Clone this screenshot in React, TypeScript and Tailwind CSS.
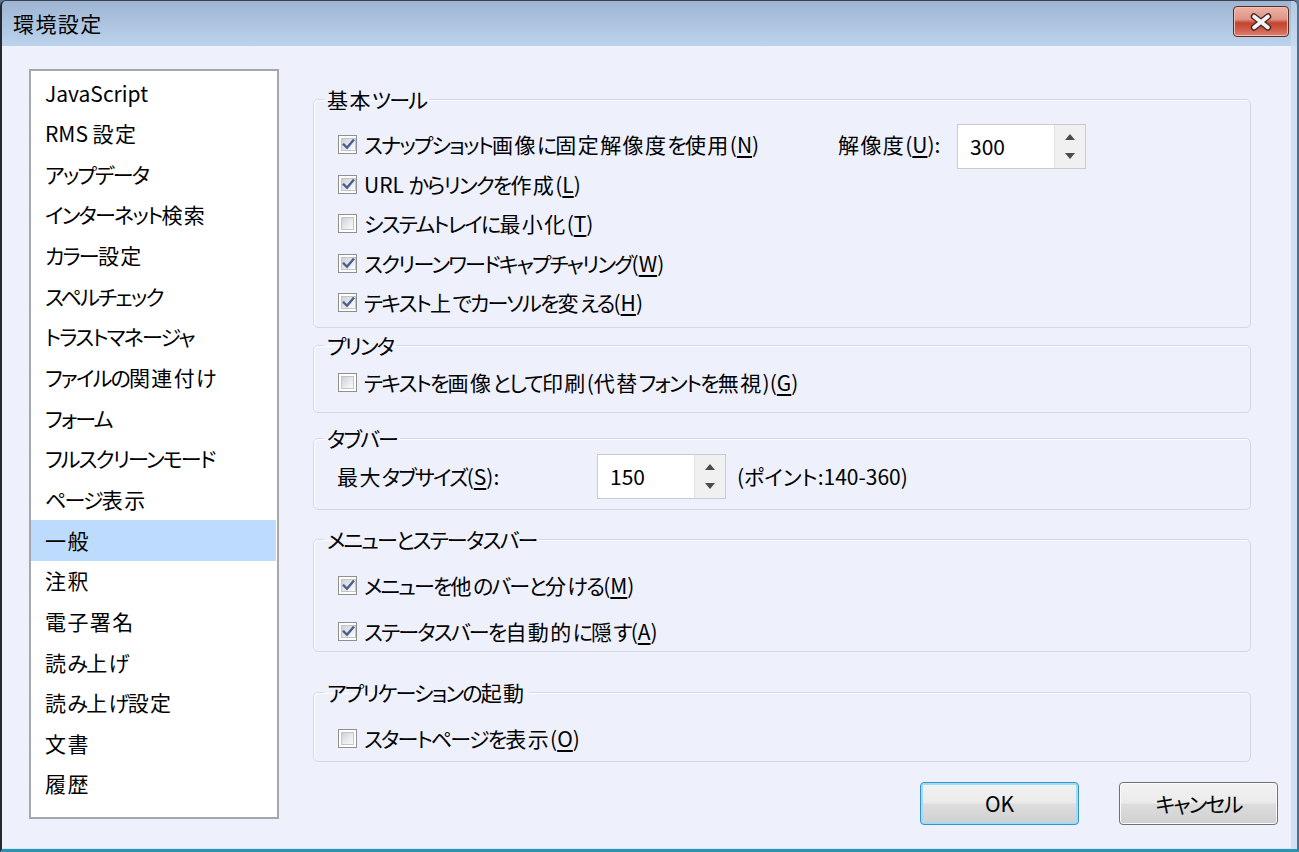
import React from "react";

const FONT = "font-['Noto_Sans_CJK_JP','Noto_Sans',sans-serif] [font-feature-settings:'palt']";

function J({ t }: { t: string }) {
  const parts = t.split(/([\u3040-\u30ff]+|[\u4e00-\u9fff]+)/).filter(Boolean);
  return (
    <>
      {parts.map((p, i) =>
        /[\u3040-\u30ff]/.test(p) ? (
          <span key={i} className="tracking-[-1.8px]">{p}</span>
        ) : /[\u4e00-\u9fff]/.test(p) ? (
          <span key={i} className="tracking-[1.4px]">{p}</span>
        ) : (
          <React.Fragment key={i}>{p}</React.Fragment>
        )
      )}
    </>
  );
}

function Cb({ checked }: { checked?: boolean }) {
  return (
    <span className="w-[19px] h-[19px] border border-[#8e8f8f] bg-white p-[2px] flex shrink-0">
      <span className="flex-1 border border-[#c3c5c9] bg-[linear-gradient(135deg,#cdd0d5_0%,#e9eaec_55%,#fbfbfb_100%)] flex items-center justify-center">
        {checked && (
          <svg width="13" height="13" viewBox="0 0 13 13">
            <path d="M1.8 6.6 L5 9.8 L11.2 2.4" fill="none" stroke="#4a5d92" strokeWidth="2.4" strokeLinecap="square" />
          </svg>
        )}
      </span>
    </span>
  );
}

function M({ c }: { c: string }) {
  return (
    <>
      (<span className="underline underline-offset-[3px] decoration-[1.5px]">{c}</span>)
    </>
  );
}

function Spin({ value }: { value: string }) {
  return (
    <div className="w-[129px] h-[45px] border border-[#c9cbd0] bg-white flex shrink-0">
      <div className="flex-1 flex items-center pl-[12px] text-[21px] text-black">{value}</div>
      <div className="w-[31px] bg-[#f0f0f0] border-l border-[#e2e2e2] flex flex-col">
        <div className="flex-1 flex items-center justify-center pt-[2px]">
          <svg width="10" height="6" viewBox="0 0 10 6"><path d="M0 6 L5 0 L10 6 Z" fill="#4b4b4b" /></svg>
        </div>
        <div className="flex-1 flex items-center justify-center pb-[2px]">
          <svg width="10" height="6" viewBox="0 0 10 6"><path d="M0 0 L10 0 L5 6 Z" fill="#4b4b4b" /></svg>
        </div>
      </div>
    </div>
  );
}

function Row({ checked, h, t, m }: { checked?: boolean; h: string; t: string; m: string }) {
  return (
    <div className={`flex items-center gap-[7px] ${h}`}>
      <Cb checked={checked} />
      <span className="text-[21px] leading-none text-black whitespace-nowrap">
        <J t={t} />
        <M c={m} />
      </span>
    </div>
  );
}

function Group({ title, cls, children }: { title: string; cls: string; children: React.ReactNode }) {
  return (
    <fieldset className={`w-[938px] border border-[#d3d9e2] rounded-[5px] shadow-[inset_1px_1px_0_#ffffff] ${cls}`}>
      <legend className="ml-[10px] px-[3px] text-[21px] leading-[24px] text-black whitespace-nowrap">
        <J t={title} />
      </legend>
      {children}
    </fieldset>
  );
}

const items = [
  "JavaScript",
  "RMS 設定",
  "アップデータ",
  "インターネット検索",
  "カラー設定",
  "スペルチェック",
  "トラストマネージャ",
  "ファイルの関連付け",
  "フォーム",
  "フルスクリーンモード",
  "ページ表示",
  "一般",
  "注釈",
  "電子署名",
  "読み上げ",
  "読み上げ設定",
  "文書",
  "履歴",
];

export default function App() {
  return (
    <div className={`w-[1299px] h-[852px] flex flex-col overflow-hidden bg-[#5f7a96] ${FONT}`}>
      <div className="flex-1 flex flex-col border-l-2 border-l-[#262a30] border-t border-t-[#3b4350] border-r-2 border-r-[#55708e] border-b-[3px] border-b-[#2a94b4] rounded-tl-[6px] rounded-tr-[6px] overflow-hidden">
        {/* Title bar */}
        <div className="h-[45px] flex shrink-0">
          <div className="flex-1 flex items-center pl-[11px] bg-[linear-gradient(to_bottom,#9db5d1,#bbd3ec)]">
            <span className="text-[21px] text-black">
              <J t="環境設定" />
            </span>
            <div className="ml-auto mr-[2px] mt-[-4px] w-[56px] h-[31px] rounded-[4px] border border-[#5b2b24] shadow-[inset_0_0_0_1px_#eec0b5] bg-[linear-gradient(to_bottom,#ecb3a6_0%,#df9585_42%,#c4432f_55%,#cc5a46_75%,#dc8270_100%)] flex items-center justify-center">
              <svg width="24" height="18" viewBox="0 0 24 18">
                <path d="M5 3.5 L19 14.5 M19 3.5 L5 14.5" stroke="#4a2a26" strokeWidth="6.5" strokeLinecap="round" />
                <path d="M5 3.5 L19 14.5 M19 3.5 L5 14.5" stroke="#f4f4f4" strokeWidth="3.6" strokeLinecap="round" />
              </svg>
            </div>
          </div>
          <div className="w-[6px] bg-[linear-gradient(to_bottom,#b4cbe3,#c7daef)]" />
        </div>
        {/* Body */}
        <div className="flex-1 flex">
          <div className="flex-1 bg-[#eef0fb] flex items-start pl-[27px] border-b border-b-[#d8e6f4]">
            {/* list */}
            <div className="mt-[23px] w-[250px] h-[750px] border-2 border-[#a6a7a9] bg-white pt-[2px] pr-[1px] flex flex-col">
              {items.map((t) => (
                <div
                  key={t}
                  className={`h-[40.65px] shrink-0 flex items-center pl-[14px] text-[21px] text-black whitespace-nowrap ${t === "一般" ? "bg-[#bddbfd]" : ""}`}
                >
                  <span>
                    <J t={t} />
                  </span>
                </div>
              ))}
            </div>
            {/* right column */}
            <div className="ml-[34px] mt-[41px] w-[965px] flex flex-col">
              <Group title="基本ツール" cls="h-[241px]">
                <div className="pl-[24px] pt-[14px] flex flex-col">
                  <div className="flex items-center h-[39.5px]">
                    <div className="w-[500px] flex items-center gap-[7px]">
                      <Cb checked />
                      <span className="text-[21px] leading-none text-black whitespace-nowrap">
                        <J t="スナップショット画像に固定解像度を使用" />
                        <M c="N" />
                      </span>
                    </div>
                    <span className="w-[119px] text-[21px] leading-none text-black whitespace-nowrap">
                      <J t="解像度" />
                      <M c="U" />:
                    </span>
                    <div className="mt-[3px]">
                      <Spin value="300" />
                    </div>
                  </div>
                  <Row checked h="h-[39.5px]" t="URL からリンクを作成" m="L" />
                  <Row h="h-[39.5px]" t="システムトレイに最小化" m="T" />
                  <Row checked h="h-[39.5px]" t="スクリーンワードキャプチャリング" m="W" />
                  <Row checked h="h-[39.5px]" t="テキスト上でカーソルを変える" m="H" />
                </div>
              </Group>
              <Group title="プリンタ" cls="h-[80px] mt-[5px]">
                <div className="pl-[24px] pt-[5px]">
                  <Row h="h-[40px]" t="テキストを画像として印刷(代替フォントを無視)" m="G" />
                </div>
              </Group>
              <Group title="タブバー" cls="h-[84px] mt-[13px]">
                <div className="pl-[23px] pt-[4px] flex items-center h-[49px]">
                  <span className="w-[260px] text-[21px] leading-none text-black whitespace-nowrap">
                    <J t="最大タブサイズ" />
                    <M c="S" />:
                  </span>
                  <Spin value="150" />
                  <span className="ml-[11px] text-[21px] leading-none text-black whitespace-nowrap">(ポイント:140-360)</span>
                </div>
              </Group>
              <Group title="メニューとステータスバー" cls="h-[125px] mt-[17px]">
                <div className="pl-[24px] pt-[11px]">
                  <Row checked h="h-[46px]" t="メニューを他のバーと分ける" m="M" />
                  <Row checked h="h-[46px]" t="ステータスバーを自動的に隠す" m="A" />
                </div>
              </Group>
              <Group title="アプリケーションの起動" cls="h-[82px] mt-[28px]">
                <div className="pl-[24px] pt-[14px]">
                  <Row h="h-[40px]" t="スタートページを表示" m="O" />
                </div>
              </Group>
              <div className="mt-[20px] flex justify-end gap-[40px]">
                <div className="w-[159px] h-[43px] rounded-[4px] border border-[#3d8fc4] shadow-[inset_0_0_0_2px_#9fdcf6] bg-[linear-gradient(to_bottom,#f2f2f2_0%,#ebebeb_48%,#dddddd_52%,#d0d0d0_100%)] flex items-center justify-center text-[21px] text-black">
                  OK
                </div>
                <div className="w-[159px] h-[43px] rounded-[4px] border border-[#707070] shadow-[inset_0_0_0_1px_#fbfbfb] bg-[linear-gradient(to_bottom,#f2f2f2_0%,#ebebeb_48%,#dddddd_52%,#d0d0d0_100%)] flex items-center justify-center text-[21px] text-black">
                  <span>
                    <J t="キャンセル" />
                  </span>
                </div>
              </div>
            </div>
          </div>
          <div className="w-[6px] bg-[#cfe0f2]" />
        </div>
      </div>
    </div>
  );
}
